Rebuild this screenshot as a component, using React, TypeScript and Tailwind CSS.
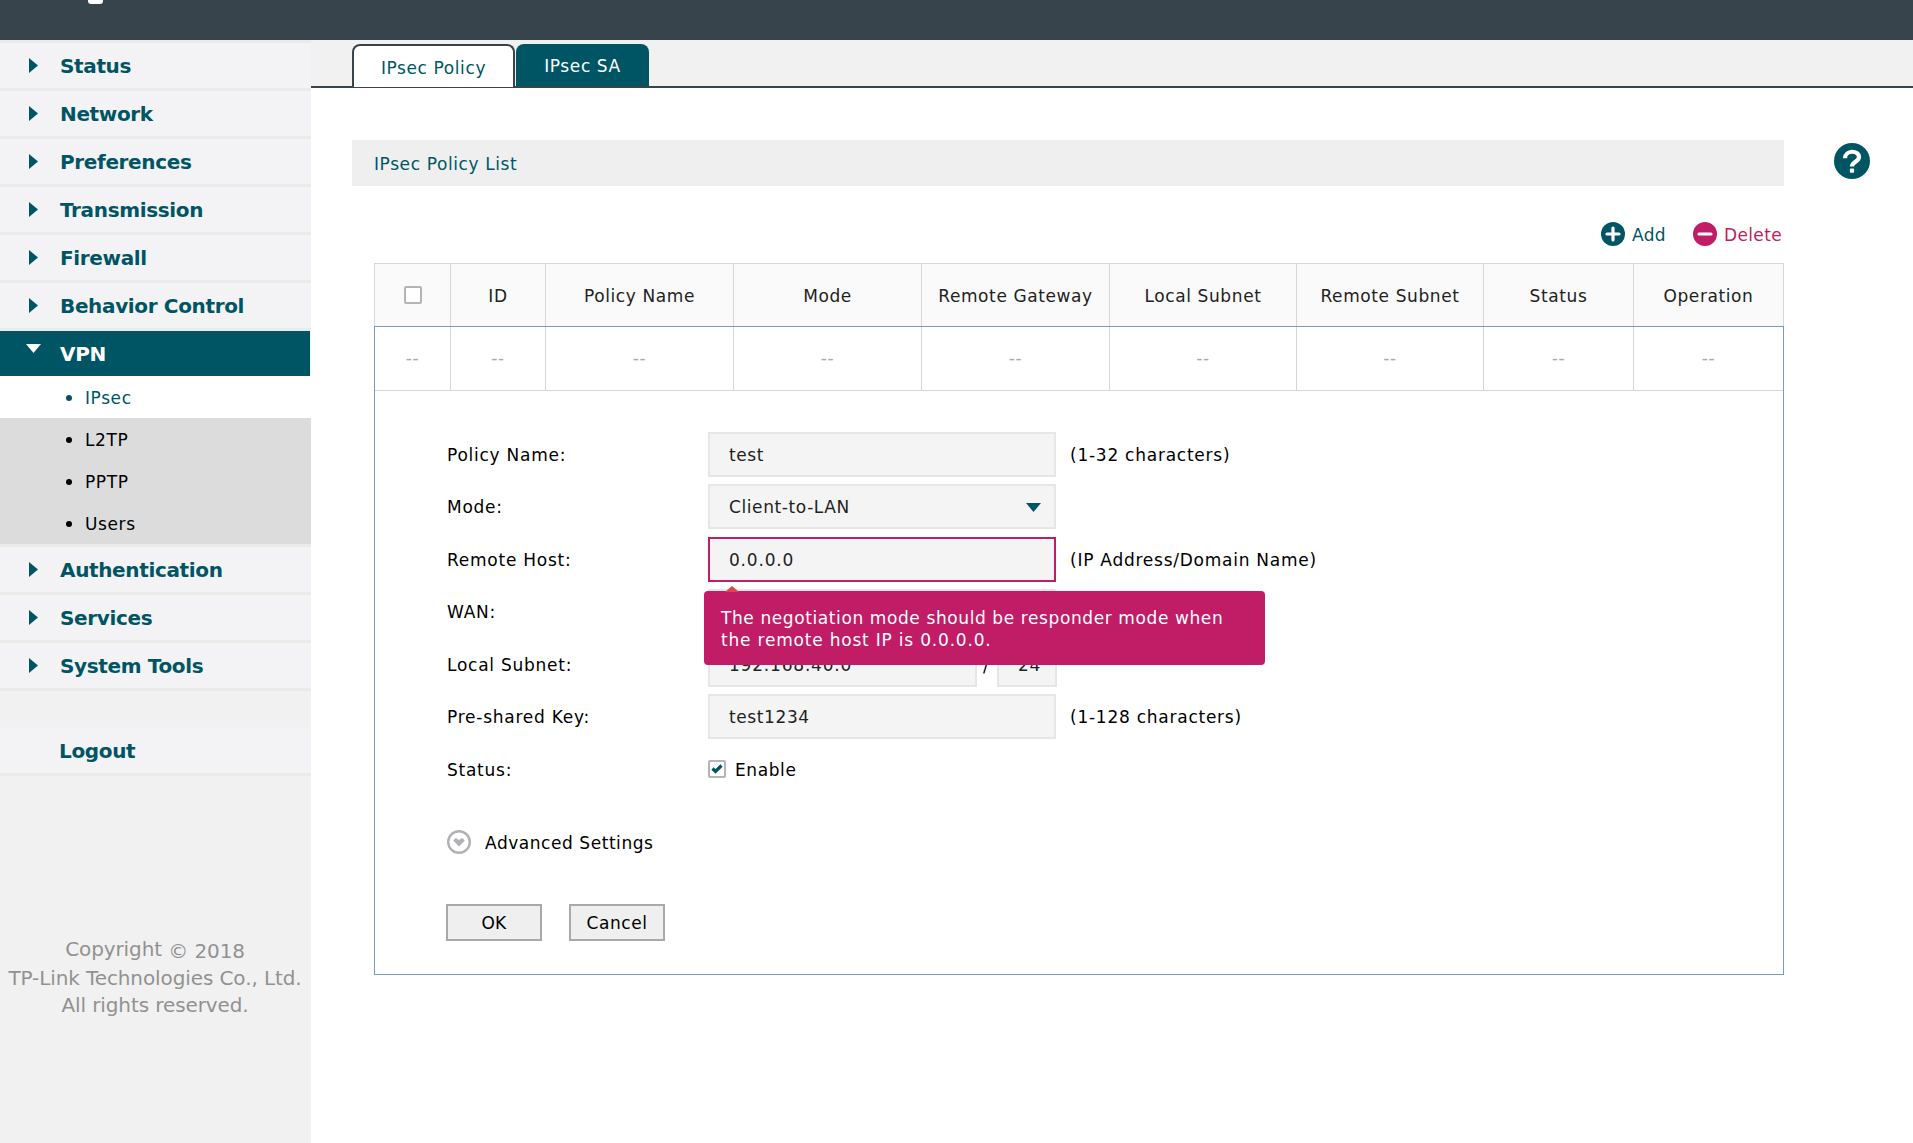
import React from 'react';

interface MenuItemProps {
  label: string;
  active?: boolean;
}

const topMenu = ['Status', 'Network', 'Preferences', 'Transmission', 'Firewall', 'Behavior Control'];
const subMenu = ['IPsec', 'L2TP', 'PPTP', 'Users'];
const bottomMenu = ['Authentication', 'Services', 'System Tools'];

const columns = [
  { title: '', width: 'w-[76px]' },
  { title: 'ID', width: 'w-[95px]' },
  { title: 'Policy Name', width: 'w-[188px]' },
  { title: 'Mode', width: 'w-[188px]' },
  { title: 'Remote Gateway', width: 'w-[188px]' },
  { title: 'Local Subnet', width: 'w-[187px]' },
  { title: 'Remote Subnet', width: 'w-[187px]' },
  { title: 'Status', width: 'w-[150px]' },
  { title: 'Operation', width: 'w-[149px]' },
];

function MenuItem({ label, active }: MenuItemProps) {
  if (active) {
    return (
      <li>
        <a className="flex h-[45px] w-[310px] items-center bg-[#005564] pl-[26px] text-white">
          <svg className="-mt-[10px] h-[9px] w-[15px]" viewBox="0 0 15 9">
            <path d="M0 0h15L7.5 9z" fill="currentColor" />
          </svg>
          <span className="ml-[19px]">{label}</span>
        </a>
      </li>
    );
  }
  return (
    <li className="border-b-[3px] border-[#eaeae8]">
      <a className="flex h-[45px] items-center bg-[#f3f3f5] pl-[29px]">
        <svg className="h-[15px] w-[9px]" viewBox="0 0 9 15">
          <path d="M0 0v15L9 7.5z" fill="currentColor" />
        </svg>
        <span className="ml-[22px]">{label}</span>
      </a>
    </li>
  );
}

function Sidebar() {
  return (
    <aside className="w-[311px] shrink-0 bg-[#f1f1f1]">
      <ul className="border-t-[3px] border-[#eaeae8] text-[20px] font-bold tracking-[-0.35px] text-[#005564]">
        {topMenu.map((label) => (
          <MenuItem key={label} label={label} />
        ))}
        <MenuItem label="VPN" active />
      </ul>
      <ul className="border-b-[3px] border-[#eaeae8] text-[17px]">
        {subMenu.map((label, i) => (
          <li
            key={label}
            className={`flex h-[42px] items-center pt-[2px] pl-[66px] ${i === 0 ? 'bg-white text-[#005564]' : 'bg-[#dcdcdc] text-black'}`}
          >
            <span className="mr-[13px] h-[6px] w-[6px] rounded-full bg-current" />
            <span className="pt-[2px]">{label}</span>
          </li>
        ))}
      </ul>
      <ul className="text-[20px] font-bold tracking-[-0.35px] text-[#005564]">
        {bottomMenu.map((label) => (
          <MenuItem key={label} label={label} />
        ))}
        <li className="mt-[37px] border-b-[3px] border-[#eaeae8]">
          <a className="flex h-[45px] items-center bg-[#f3f3f5] pl-[59px]">Logout</a>
        </li>
      </ul>
      <div className="mt-[160px] -ml-[1px] text-center text-[20px] leading-[27px] tracking-[-0.1px] whitespace-nowrap text-[#919191]">
        <p>Copyright <span className="relative top-[2px]">© 2018</span></p>
        <p className="mt-[2px]">TP-Link Technologies Co., Ltd.</p>
        <p>All rights reserved.</p>
      </div>
    </aside>
  );
}

interface FieldProps {
  label: string;
  hint?: string;
  children?: React.ReactNode;
}

function Field({ label, hint, children }: FieldProps) {
  return (
    <div className="flex h-[52.5px] items-start">
      <label className="w-[261px] leading-[46px] tracking-[0.75px]">{label}</label>
      {children}
      {hint && <span className="ml-[14px] leading-[46px] tracking-[0.75px]">{hint}</span>}
    </div>
  );
}

const inputClass = 'h-[45px] border-2 border-[#e6e6e6] bg-[#f4f4f4] px-[19px] pt-[1px] text-[#222] outline-none';

export default function App() {
  return (
    <div className="flex h-[1143px] flex-col overflow-hidden bg-white font-['DejaVu_Sans',sans-serif] text-[17px] tracking-[0.6px] text-black">
      <header className="h-10 shrink-0 bg-[#37444c] pl-[88px]">
        <div className="h-[4px] w-[15px] rounded-b-[3px] bg-white" />
      </header>
      <div className="flex flex-1">
        <Sidebar />
        <main className="flex-1">
          {/* tabs */}
          <nav className="flex h-12 items-end gap-[1px] border-b-2 border-[#37444c] bg-[#f1f1f1] pl-[41px]">
            <a className="-mb-[1px] flex h-[43px] w-[163px] items-center justify-center rounded-t-[8px] border-2 border-b-0 border-[#37444c] bg-white pt-[4px] text-[#005564]">
              IPsec Policy
            </a>
            <a className="flex h-[42px] w-[133px] items-center justify-center rounded-t-[8px] bg-[#005564] pt-[3px] text-white">
              IPsec SA
            </a>
          </nav>

          <div className="flex pt-[52px] pl-[41px]">
            <h2 className="flex h-[46px] w-[1432px] items-center bg-[#efefef] pt-[3px] pl-[22px] text-[#005564]">
              IPsec Policy List
            </h2>
            <svg className="mt-[3px] ml-[50px] h-[36px] w-[36px]" viewBox="0 0 36 36">
              <circle cx="18" cy="18" r="18" fill="#005564" />
              <path
                d="M11 15.3C11 6.8 25 6.8 25 14c0 5-7 4.6-7 9.6"
                fill="none"
                stroke="#fff"
                strokeWidth="4.2"
              />
              <rect x="15.9" y="25.6" width="4.2" height="4.2" rx="0.8" fill="#fff" />
            </svg>
          </div>

          <div className="ml-[63px] w-[1410px]">
            <div className="flex h-[77px] items-center justify-end pt-[19px] pr-[2px]">
              <a className="flex items-center gap-[7px] text-[#005564]">
                <svg className="h-6 w-6" viewBox="0 0 24 24">
                  <circle cx="12" cy="12" r="12" fill="currentColor" />
                  <path d="M12 6v12M6 12h12" stroke="#fff" strokeWidth="3.2" strokeLinecap="round" />
                </svg>
                <span className="pt-[3px] tracking-[0.4px]">Add</span>
              </a>
              <a className="ml-[27px] flex items-center gap-[7px] text-[#c11c66]">
                <svg className="h-6 w-6" viewBox="0 0 24 24">
                  <circle cx="12" cy="12" r="12" fill="currentColor" />
                  <path d="M6 12h12" stroke="#fff" strokeWidth="3.2" strokeLinecap="round" />
                </svg>
                <span className="pt-[3px] tracking-[0.35px]">Delete</span>
              </a>
            </div>

            {/* policy table */}
            <div className="flex h-[63px] border border-b-0 border-[#d6d6d6] bg-[#fafafa] text-[#222]">
              {columns.map((col, i) => (
                <div
                  key={i}
                  className={`flex shrink-0 items-center justify-center border-[#d6d6d6] ${i < 8 ? 'border-r' : ''} ${col.width}`}
                >
                  {col.title ? (
                    <span className="pt-[3px]">{col.title}</span>
                  ) : (
                    <span className="h-[18px] w-[18px] rounded-[2px] border-2 border-[#b4b4b4] bg-white" />
                  )}
                </div>
              ))}
            </div>
            <div className="h-[649px] border border-[#7b9bb8]">
              <div className="flex h-[64px] border-b border-[#d6d6d6] text-[#aaa]">
                {columns.map((col, i) => (
                  <div
                    key={i}
                    className={`flex shrink-0 items-center justify-center border-[#d6d6d6] ${i < 8 ? 'border-r' : ''} ${col.width}`}
                  >
                    --
                  </div>
                ))}
              </div>

              {/* edit form */}
              <form className="pt-[40.8px] pl-[72px]">
                <Field label="Policy Name:" hint="(1-32 characters)">
                  <input className={`${inputClass} w-[348px]`} defaultValue="test" />
                </Field>
                <Field label="Mode:">
                  <div className={`${inputClass} flex w-[348px] items-center justify-between !pr-[13px]`}>
                    Client-to-LAN
                    <svg className="h-[9px] w-[15px] text-[#005564]" viewBox="0 0 15 9">
                      <path d="M0 0h15L7.5 9z" fill="currentColor" />
                    </svg>
                  </div>
                </Field>
                <Field label="Remote Host:" hint="(IP Address/Domain Name)">
                  <div className="relative">
                    <input className={`${inputClass} w-[348px] !border-[#c11c66] tracking-[0.8px]`} defaultValue="0.0.0.0" />
                    <div className="absolute top-[54px] -left-[4px] z-10 h-[74px] w-[561px] rounded-[4px] bg-[#c11c66] pt-[16px] pl-[17px] leading-[22px] text-white">
                      <svg className="absolute -top-[5px] left-[21px] h-[6px] w-[14px]" viewBox="0 0 14 6">
                        <path d="M0 6L7 0l7 6z" fill="#dc4545" />
                      </svg>
                      The negotiation mode should be responder mode when
                      <br />
                      <span className="tracking-[0.8px]">the remote host IP is 0.0.0.0.</span>
                    </div>
                  </div>
                </Field>
                <Field label="WAN:">
                  <div className={`${inputClass} w-[348px]`} />
                </Field>
                <Field label="Local Subnet:">
                  <input className={`${inputClass} w-[269px] tracking-[0.8px]`} defaultValue="192.168.40.0" />
                  <span className="w-5 pl-[6px] leading-[48px]">/</span>
                  <input className={`${inputClass} w-[60px] !pr-0`} defaultValue="24" />
                </Field>
                <Field label="Pre-shared Key:" hint="(1-128 characters)">
                  <input className={`${inputClass} w-[348px]`} defaultValue="test1234" />
                </Field>
                <Field label="Status:">
                  <span className="mt-[13px] flex h-[18px] w-[18px] items-center justify-center rounded-[2px] border-2 border-[#b4b4b4] bg-white">
                    <svg className="h-[10px] w-[12px]" viewBox="0 0 12 10">
                      <path d="M1.5 4.5l3 3 6-6" fill="none" stroke="#005564" strokeWidth="3.2" />
                    </svg>
                  </span>
                  <span className="ml-[9px] leading-[46px]">Enable</span>
                </Field>

                <div className="mt-[28px] flex items-center">
                  <svg className="h-6 w-6" viewBox="0 0 24 24">
                    <circle cx="12" cy="12" r="10.8" fill="none" stroke="#b0b1b4" strokeWidth="2.4" />
                    <path d="M6.2 10.5l2.6-2.4 3.2 2 3.2-2 2.6 2.4-5.8 6z" fill="#b0b1b4" />
                  </svg>
                  <span className="ml-[14px] pt-[4px] tracking-[0.55px]">Advanced Settings</span>
                </div>

                <div className="mt-[47px] -ml-[1px] flex gap-[27px]">
                  <button type="button" className="h-[37px] w-24 border-2 border-[#a9a9a9] bg-[#efefef] pt-[2px] tracking-[0.3px]">OK</button>
                  <button type="button" className="h-[37px] w-24 border-2 border-[#a9a9a9] bg-[#efefef] pt-[2px] tracking-[0.55px]">Cancel</button>
                </div>
              </form>
            </div>
          </div>
        </main>
      </div>
    </div>
  );
}
